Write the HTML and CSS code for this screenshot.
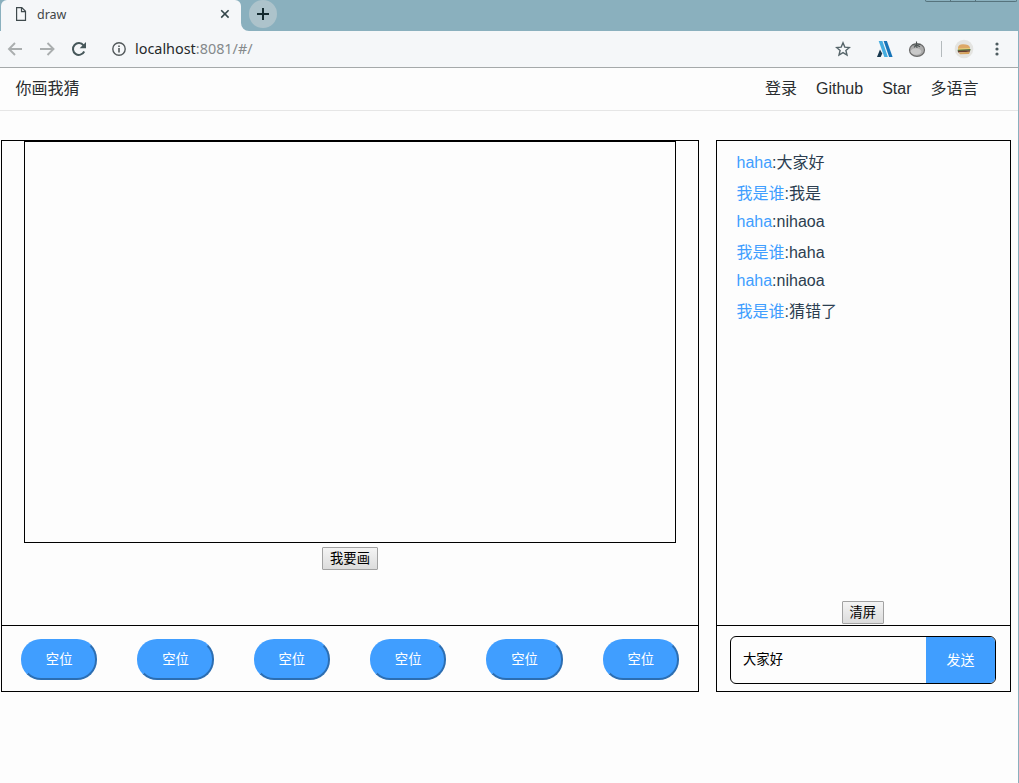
FILE: index.html
```html
<!DOCTYPE html>
<html lang="zh-CN">
<head>
<meta charset="utf-8">
<title>draw</title>
<link rel="stylesheet" href="styles.css">
</head>
<body>
<div class="window">
  <header class="tabstrip">
    <div class="tab">
      <svg class="file-icon" width="12" height="16" viewBox="0 0 12 16"><path d="M1.600 1.600h5.200l3.700 3.700v9.100H1.600zM6.500 1.600v4h4" fill="none" stroke="#3f4a4d" stroke-width="1.200"/></svg>
      <span class="tab-title">draw</span>
      <svg class="close-icon" width="10" height="10" viewBox="0 0 10 10"><path d="M1.200 1.200l7.400 7.400M8.600 1.200L1.200 8.600" stroke="#35474b" stroke-width="1.600"/></svg>
    </div>
    <svg class="tab-curve" width="8" height="31" viewBox="0 0 8 31"><path d="M0 0v31h8a8 8 0 0 1-8-8z" fill="#f5f7f9"/></svg>
    <div class="new-tab"><svg width="12" height="12" viewBox="0 0 12 12"><path d="M6 0v12M0 6h12" stroke="#142a2f" stroke-width="2"/></svg></div>
    <div class="window-controls"><i></i><i></i><i></i></div>
  </header>
  <div class="toolbar">
    <svg class="back" width="16" height="14" viewBox="0 0 16 14"><path d="M15 7H2M8 1L2 7l6 6" fill="none" stroke="#aaaeaf" stroke-width="1.900"/></svg>
    <svg class="forward" width="16" height="14" viewBox="0 0 16 14"><path d="M0 7h13M7.500 1l6 6-6 6" fill="none" stroke="#aaaeaf" stroke-width="1.900"/></svg>
    <svg class="reload" width="16" height="16" viewBox="0 0 16 16"><path d="M13.200 10.500A5.900 5.900 0 1 1 12.500 4.300" fill="none" stroke="#46575a" stroke-width="2"/><path d="M15 1v6.300H8.700z" fill="#46575a"/></svg>
    <svg class="info" width="14" height="14" viewBox="0 0 14 14"><circle cx="7" cy="7" r="6.200" fill="none" stroke="#53595b" stroke-width="1.400"/><path d="M7 6v4.500M7 3.400v1.600" stroke="#53595b" stroke-width="1.600"/></svg>
    <span class="address">localhost<span class="path">:8081/#/</span></span>
    <svg class="star" width="16" height="16" viewBox="0 0 16 16"><path d="M8 1.800l1.800 4.300 4.600.4-3.500 3 1.100 4.500L8 11.600 4 14l1.100-4.500-3.500-3 4.600-.4z" fill="none" stroke="#56656a" stroke-width="1.400"/></svg>
    <svg class="ext-stripes" width="16" height="16" viewBox="0 0 16 16"><path d="M3 8.500L5.200 12.500 3.700 16H0z" fill="#16384f"/><path d="M1.700 0h3.700l5.500 16H7.300z" fill="#45ade0"/><path d="M6.600 0h3.300l5.700 16h-3.500z" fill="#1774b8"/></svg>
    <svg class="tomato" width="18" height="18" viewBox="0 0 18 18"><ellipse cx="9" cy="10" rx="7.500" ry="6.300" fill="#acacac" stroke="#6c6c6c" stroke-width="1.200"/><ellipse cx="8" cy="11.500" rx="5.300" ry="3.300" fill="#c9c9c9"/><path d="M8.500 1.500v3.700M4.500 4.500l4 .7 4-1M8.500 5l-2.500 2.300M8.500 5l.5 3M8.500 5l3.500 1.700" stroke="#4e5555" stroke-width="1.100" fill="none"/></svg>
    <i class="divider"></i>
    <svg class="avatar" width="20" height="20" viewBox="0 0 20 20"><circle cx="10" cy="10" r="9.300" fill="#e4e4e1"/><path d="M4 9Q4 5.500 9 5.300q6 0 7 3.200v1L4 10z" fill="#dda866"/><path d="M4 9.600l12-.6v1.400l-12 .8z" fill="#e8cf73"/><path d="M3.700 10.800l12.800-.8v1.500l-12.800.9z" fill="#5a7340"/><path d="M4 12.100l12-.8v1.500l-12 .7z" fill="#693e31"/><path d="M4.500 13.400l11.500-.7-1 2.300-9 .3z" fill="#d6a25c"/></svg>
    <svg class="more" width="4" height="14" viewBox="0 0 4 14"><circle cx="2" cy="2" r="1.600" fill="#4d5c60"/><circle cx="2" cy="7" r="1.600" fill="#4d5c60"/><circle cx="2" cy="12" r="1.600" fill="#4d5c60"/></svg>
  </div>
  <div class="page">
    <nav class="nav">
      <span class="brand">你画我猜</span>
      <span class="link">登录</span><span class="link">Github</span><span class="link">Star</span><span class="link">多语言</span>
    </nav>
    <main class="main">
      <section class="panel board">
        <div class="stage">
          <canvas class="canvas" width="650" height="400"></canvas>
          <button class="native">我要画</button>
        </div>
        <div class="seats">
          <button class="seat">空位</button><button class="seat">空位</button><button class="seat">空位</button><button class="seat">空位</button><button class="seat">空位</button><button class="seat">空位</button>
        </div>
      </section>
      <section class="panel chat">
        <div class="messages">
          <p class="msg tall"><span class="user">haha</span>:大家好</p>
          <p class="msg tall"><span class="user">我是谁</span>:我是</p>
          <p class="msg"><span class="user">haha</span>:nihaoa</p>
          <p class="msg tall"><span class="user">我是谁</span>:haha</p>
          <p class="msg"><span class="user">haha</span>:nihaoa</p>
          <p class="msg tall"><span class="user">我是谁</span>:猜错了</p>
          <button class="native clear">清屏</button>
        </div>
        <div class="composer">
          <div class="field"><input class="input" value="大家好"><button class="send">发送</button></div>
        </div>
      </section>
    </main>
  </div>
</div>
</body>
</html>
```
FILE: styles.css
```css
* { box-sizing: border-box; }
body { margin: 0; background: #fdfdfd; font-family: "Liberation Sans", "Noto Sans CJK SC", sans-serif; color: #2c3e50; }
button, input { font-family: inherit; }
svg { display: block; flex: none; }
.window { width: 1019px; height: 783px; overflow: hidden; display: flex; flex-direction: column; }

.tabstrip { height: 31px; background: #8ab0be; display: flex; flex: none; }
.tab { width: 240px; margin-left: 1px; background: #f5f7f9; border-radius: 6px 6px 0 0; display: flex; align-items: center; padding: 0 11px 3px 14px; }
.tab-title { font: 12.5px "Noto Sans", sans-serif; color: #404648; margin-left: 10px; flex: 1; }
.new-tab { width: 28px; height: 28px; border-radius: 50%; background: #adc3cb; display: flex; align-items: center; justify-content: center; }
.window-controls { margin-left: auto; margin-right: 2px; width: 92px; height: 2px; border: 1px solid #56737d; border-top: 0; border-radius: 0 0 4px 4px; display: grid; grid-template-columns: 24px 25px 1fr; }
.window-controls i + i { border-left: 1px solid #56737d; }

.toolbar { height: 37px; flex: none; background: #f5f7f9; border-bottom: 1px solid #a5a9aa; border-right: 1px solid #8ab0be; display: flex; align-items: center; padding-left: 7px; padding-right: 19px; }
.forward { margin-left: 17px; }
.reload { margin-left: 15px; }
.info { margin-left: 25px; }
.address { font: 14.4px "Noto Sans", sans-serif; color: #25292b; margin-left: 9px; flex: 1; padding-bottom: 2px; }
.path { color: #858a8c; }
.ext-stripes { margin-left: 26px; }
.tomato { margin-left: 15px; }
.divider { width: 1px; height: 16px; background: #b4babd; margin-left: 15px; }
.avatar { margin-left: 12px; }
.more { margin-left: 21px; }

.page { flex: 1; border-right: 1px solid #8ab0be; }
.nav { height: 43px; border-bottom: 1px solid #e6e6e6; display: flex; align-items: baseline; padding: 9px 39.5px 0 15.5px; gap: 19px; font-size: 16px; line-height: 24px; color: #2a2d2f; }
.brand { margin-right: auto; }
.main { display: flex; gap: 17px; padding: 29px 0 0 1px; }
.panel { height: 552px; border: 1px solid #000; display: flex; flex-direction: column; }
.board { width: 698px; }
.chat { width: 295px; }
.stage { height: 485px; border-bottom: 1px solid #000; display: flex; flex-direction: column; align-items: center; gap: 4px; }
.canvas { width: 652px; height: 402px; border: 1px solid #000; display: block; }
.native { height: 23px; border: 1px solid #a2a2a2; border-radius: 1px; padding: 0 7px; font-size: 13.333px; line-height: 21px; color: #000; background: linear-gradient(#f4f4f4, #dcdcdc); }
.seats { flex: 1; display: grid; grid-template-columns: repeat(6, 1fr); justify-items: center; align-items: start; padding-top: 13px; margin: 0 -1px; }
.seat { width: 76.5px; height: 41px; border: 2px solid; border-color: #409eff #2c6eb2 #2c6eb2 #409eff; border-radius: 20px; background: #409eff; color: #fff; font-size: 13.333px; padding: 0 0 2px; }

.messages { height: 485px; border-bottom: 1px solid #000; padding: 7px 20px 1px 19.5px; display: flex; flex-direction: column; }
.msg { margin: 0 0 5px; height: 23px; line-height: 23px; font-size: 16px; }
.msg.tall { height: 26px; line-height: 29px; }
.user { color: #409eff; }
.clear { margin-top: auto; align-self: center; width: 42px; margin-right: 1px; padding: 0; }
.composer { flex: 1; padding: 10px 14px 7px 13px; }
.field { height: 48px; display: flex; border: 1px solid #000; border-radius: 6px; overflow: hidden; }
.input { flex: 1; min-width: 0; border: 0; padding: 0 12px 3px; font-size: 13.333px; color: #000; background: transparent; outline: 0; }
.send { width: 69px; border: 0; background: #409eff; color: #fff; font-size: 14px; padding: 0 0 2px; }
```
